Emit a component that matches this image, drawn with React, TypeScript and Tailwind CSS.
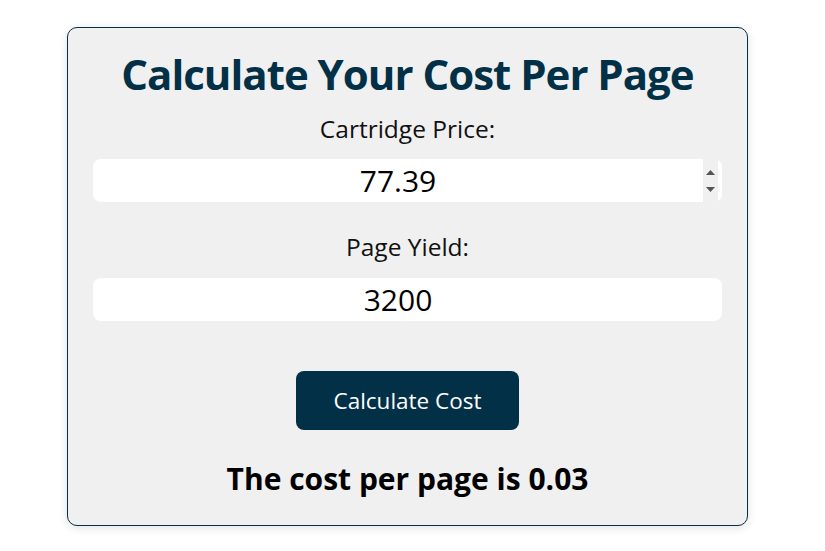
export default function App() {
  return (
    <div className="min-h-[551px] bg-white pt-[27px] pl-[67px]" style={{ fontFamily: '"Open Sans", "Liberation Sans", sans-serif' }}>
      <div className="w-[681px] rounded-[10px] border border-[#023047] bg-[#f0f0f0] px-[25px] pt-[20px] pb-[26px] shadow-[0_2px_10px_rgba(0,0,0,0.12)] flex flex-col items-center">
        <h1 className="text-[42px] leading-[52px] font-bold tracking-[-1px] text-[#023047]">Calculate Your Cost Per Page</h1>
        <label className="mt-[13px] text-[24.5px] leading-[32px] text-[#111]">Cartridge Price:</label>
        <div className="relative mt-[14px] h-[43px] w-full rounded-[8px] bg-white pr-[19px] flex items-center justify-center">
          <span className="text-[30px] leading-[40px] text-black">77.39</span>
          <div className="absolute right-[4px] top-0 h-full w-[15px] bg-[#f0f0f0] flex flex-col items-center justify-center gap-[12px]">
            <svg width="9" height="5" viewBox="0 0 9 5"><path d="M0 5 L4.5 0 L9 5 Z" fill="#555" /></svg>
            <svg width="9" height="5" viewBox="0 0 9 5"><path d="M0 0 L4.5 5 L9 0 Z" fill="#555" /></svg>
          </div>
        </div>
        <label className="mt-[29px] text-[24.5px] leading-[32px] text-[#111]">Page Yield:</label>
        <div className="mt-[15px] h-[43px] w-full rounded-[8px] bg-white pr-[19px] flex items-center justify-center">
          <span className="text-[30px] leading-[40px] text-black">3200</span>
        </div>
        <button className="mt-[50px] h-[59px] w-[223px] rounded-[8px] bg-[#023047] text-white text-[22.5px] leading-[32px]">Calculate Cost</button>
        <p className="mt-[29px] text-[30px] leading-[40px] font-bold text-black">The cost per page is 0.03</p>
      </div>
    </div>
  );
}
